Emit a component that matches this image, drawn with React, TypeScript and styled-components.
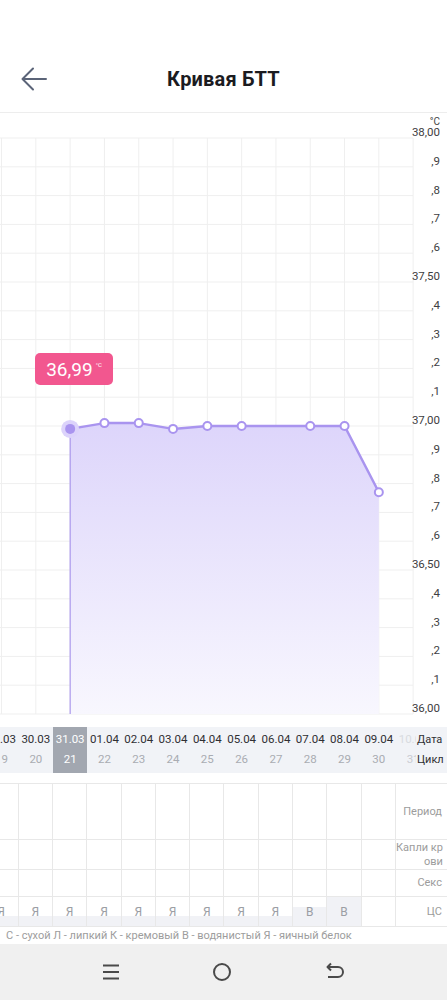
import styled, { createGlobalStyle } from 'styled-components';

const GlobalStyle = createGlobalStyle`
  body {
    margin: 0;
    font-family: Roboto, 'Noto Sans', sans-serif;
    background: #fff;
  }
`;

const COL = 34.3;
const SHIFT = -15.6;
const TOP = 25;
const STEP = 28.8;

const days = [
  { date: '29.03', cycle: 19, cs: 'Я', fill: 10 },
  { date: '30.03', cycle: 20, cs: 'Я', fill: 10 },
  { date: '31.03', cycle: 21, cs: 'Я', fill: 10, temp: 36.99, active: true },
  { date: '01.04', cycle: 22, cs: 'Я', fill: 10, temp: 37.01 },
  { date: '02.04', cycle: 23, cs: 'Я', fill: 10, temp: 37.01 },
  { date: '03.04', cycle: 24, cs: 'Я', fill: 10, temp: 36.99 },
  { date: '04.04', cycle: 25, cs: 'Я', fill: 10, temp: 37.0 },
  { date: '05.04', cycle: 26, cs: 'Я', fill: 10, temp: 37.0 },
  { date: '06.04', cycle: 27, cs: 'Я', fill: 10 },
  { date: '07.04', cycle: 28, cs: 'В', fill: 19, temp: 37.0 },
  { date: '08.04', cycle: 29, cs: 'В', fill: 29, temp: 37.0 },
  { date: '09.04', cycle: 30, cs: '', fill: 0, temp: 36.77 },
  { date: '10.04', cycle: 31, cs: '', fill: 0, faded: true },
];

const yLabels = ['38,00', ',9', ',8', ',7', ',6', '37,50', ',4', ',3', ',2', ',1', '37,00', ',9', ',8', ',7', ',6', '36,50', ',4', ',3', ',2', ',1', '36,00'];

const colX = (i: number) => SHIFT + COL * i + COL / 2;
const tempY = (t: number) => TOP + (38 - t) * 10 * STEP;

const Page = styled.div`
  width: 447px;
  height: 1000px;
  display: flex;
  flex-direction: column;
  overflow: hidden;
`;

const StatusBar = styled.div`
  height: 48px;
`;

const Header = styled.div`
  height: 64px;
  border-bottom: 1px solid #ededed;
  display: flex;
  align-items: center;
  justify-content: center;
  position: relative;
`;

const BackButton = styled.div`
  position: absolute;
  left: 20px;
  top: 17px;
  width: 28px;
  height: 28px;
`;

const Title = styled.h1`
  margin: 0 0 2px;
  font-size: 20px;
  font-weight: 700;
  color: #1b1b1f;
  letter-spacing: 0.2px;
`;

const ChartArea = styled.div`
  position: relative;
  height: 614px;
`;

const Tooltip = styled.div`
  position: absolute;
  left: 35px;
  top: 240px;
  width: 78px;
  height: 32px;
  border-radius: 5px;
  background: #f2578f;
  color: #fff;
  display: flex;
  align-items: center;
  justify-content: center;
  font-size: 19px;
  sup {
    font-size: 6px;
    margin-left: 3px;
    margin-top: -10px;
  }
`;

const Strip = styled.div`
  height: 46px;
  background: #f1f3f7;
  display: flex;
  position: relative;
`;

const Track = styled.div<{ $width: number }>`
  width: ${(p) => p.$width}px;
  flex-shrink: 0;
  overflow: hidden;
  display: flex;
`;

const Columns = styled.div`
  display: flex;
  margin-left: ${SHIFT}px;
`;

const DayCell = styled.div<{ $active?: boolean; $faded?: boolean }>`
  width: ${COL}px;
  flex-shrink: 0;
  display: flex;
  flex-direction: column;
  align-items: center;
  justify-content: space-around;
  padding: 2px 0 4px;
  box-sizing: border-box;
  background: ${(p) => (p.$active ? '#a2a7b0' : 'transparent')};
  font-size: 11.5px;
  color: ${(p) => (p.$active ? '#fff' : p.$faded ? '#d8dbe0' : '#2f2f33')};
  white-space: nowrap;
`;

const CycleNum = styled.span<{ $active?: boolean; $faded?: boolean }>`
  font-size: 11.5px;
  color: ${(p) => (p.$active ? '#fff' : p.$faded ? '#c9ccd2' : '#a9acb2')};
`;

const StripLabels = styled.div`
  flex: 1;
  display: flex;
  flex-direction: column;
  justify-content: space-around;
  padding: 2px 0 4px 1px;
  font-size: 11px;
  color: #2f2f33;
  background: #f1f3f7;
  white-space: nowrap;
`;

const Table = styled.div`
  margin-top: 10px;
  border-top: 1px solid #e8e8e8;
`;

const Row = styled.div<{ $h: number }>`
  height: ${(p) => p.$h}px;
  display: flex;
  border-bottom: 1px solid #e8e8e8;
`;

const Cell = styled.div<{ $fill?: number }>`
  width: ${COL}px;
  flex-shrink: 0;
  box-sizing: border-box;
  border-right: 1px solid #e8e8e8;
  display: flex;
  align-items: center;
  justify-content: center;
  font-size: 12px;
  color: #9b9ea4;
  background: linear-gradient(
    to top,
    #f1f2f6 ${(p) => p.$fill ?? 0}px,
    #fff ${(p) => p.$fill ?? 0}px
  );
`;

const RowLabel = styled.div`
  flex: 1;
  display: flex;
  align-items: center;
  justify-content: flex-end;
  text-align: right;
  padding-right: 5px;
  font-size: 11px;
  line-height: 14px;
  color: #9c9c9c;
  white-space: nowrap;
`;

const Legend = styled.div`
  height: 17px;
  padding-left: 6px;
  font-size: 11px;
  line-height: 17px;
  color: #9d9d9d;
  white-space: nowrap;
`;

const NavBar = styled.div`
  flex: 1;
  background: #f0f0f0;
  display: flex;
  align-items: center;
  justify-content: space-around;
  padding: 0 56px;
`;

const tableRows = [
  { label: <>Период</>, h: 55 },
  { label: <>Капли кр<br />ови</>, h: 29 },
  { label: <>Секс</>, h: 26 },
];

function Chart() {
  const pts = days
    .map((d, i) => (d.temp !== undefined ? { x: colX(i), y: tempY(d.temp), active: d.active } : null))
    .filter((p): p is { x: number; y: number; active: boolean | undefined } => p !== null);
  const bottom = TOP + 20 * STEP;
  const line = pts.map((p) => `${p.x},${p.y}`).join(' ');
  const area = `${pts[0].x},${bottom} ${line} ${pts[pts.length - 1].x},${bottom}`;

  return (
    <svg width="447" height="614" style={{ display: 'block' }}>
      <defs>
        <linearGradient id="fill" x1="0" y1="0" x2="0" y2="1">
          <stop offset="0" stopColor="#ddd5fb" />
          <stop offset="1" stopColor="#f8f7fe" />
        </linearGradient>
      </defs>
      {yLabels.map((_, k) => (
        <line key={`h${k}`} x1="0" x2="413" y1={TOP + k * STEP} y2={TOP + k * STEP} stroke="#efefef" strokeWidth="1" />
      ))}
      {days.map((_, i) => (
        <line key={`v${i}`} x1={colX(i)} x2={colX(i)} y1={TOP} y2={bottom} stroke="#efefef" strokeWidth="1" />
      ))}
      <polygon points={area} fill="url(#fill)" />
      <line x1={pts[0].x} x2={pts[0].x} y1={pts[0].y} y2={bottom} stroke="#9d88ea" strokeWidth="1" />
      <polyline points={line} fill="none" stroke="#a994ef" strokeWidth="2.5" strokeLinejoin="round" />
      {pts.map((p, i) =>
        p.active ? (
          <g key={i}>
            <circle cx={p.x} cy={p.y} r="9" fill="#dcd3fb" />
            <circle cx={p.x} cy={p.y} r="5" fill="#a994ef" />
          </g>
        ) : (
          <circle key={i} cx={p.x} cy={p.y} r="4" fill="#fff" stroke="#a994ef" strokeWidth="2" />
        )
      )}
      <text x="440" y="12" fontSize="10" textAnchor="end" fill="#444" fontFamily="Roboto, sans-serif">°C</text>
      {yLabels.map((l, k) => (
        <text key={`t${k}`} x="440" y={TOP + k * STEP - 2} fontSize="11.5" textAnchor="end" fill="#3e3e42" fontFamily="Roboto, sans-serif">
          {l}
        </text>
      ))}
    </svg>
  );
}

export default function App() {
  return (
    <Page>
      <GlobalStyle />
      <StatusBar />
      <Header>
        <BackButton>
          <svg width="28" height="28" viewBox="0 0 28 28" fill="none" stroke="#5b6478" strokeWidth="2" strokeLinecap="round" strokeLinejoin="round">
            <path d="M26 14H3M13 3.5L2.5 14 13 24.5" />
          </svg>
        </BackButton>
        <Title>Кривая БТТ</Title>
      </Header>

      <ChartArea>
        <Chart />
        <Tooltip>
          36,99<sup>°C</sup>
        </Tooltip>
      </ChartArea>

      <Strip>
        <Track $width={416}>
          <Columns>
            {days.map((d) => (
              <DayCell key={d.date} $active={d.active} $faded={d.faded}>
                <span>{d.date}</span>
                <CycleNum $active={d.active} $faded={d.faded}>{d.cycle}</CycleNum>
              </DayCell>
            ))}
          </Columns>
        </Track>
        <StripLabels>
          <span>Дата</span>
          <span>Цикл</span>
        </StripLabels>
      </Strip>

      <Table>
        {tableRows.map((r, ri) => (
          <Row key={ri} $h={r.h}>
            <Track $width={396}>
              <Columns>
                {days.slice(0, 12).map((d) => (
                  <Cell key={d.date} />
                ))}
              </Columns>
            </Track>
            <RowLabel>{r.label}</RowLabel>
          </Row>
        ))}
        <Row $h={29}>
          <Track $width={396}>
            <Columns>
              {days.slice(0, 12).map((d) => (
                <Cell key={d.date} $fill={d.fill}>
                  {d.cs}
                </Cell>
              ))}
            </Columns>
          </Track>
          <RowLabel>ЦС</RowLabel>
        </Row>
      </Table>

      <Legend>С - сухой Л - липкий К - кремовый В - водянистый Я - яичный белок</Legend>

      <NavBar>
        <svg width="20" height="20" viewBox="0 0 20 20" stroke="#4a4a4a" strokeWidth="2">
          <path d="M2 3.5h16M2 10h16M2 16.5h16" />
        </svg>
        <svg width="22" height="22" viewBox="0 0 22 22" fill="none" stroke="#4a4a4a" strokeWidth="2">
          <circle cx="11" cy="11" r="8" />
        </svg>
        <svg width="22" height="22" viewBox="0 0 22 22" fill="none" stroke="#4a4a4a" strokeWidth="2" strokeLinejoin="round">
          <path d="M4 6h10a5 5 0 0 1 0 10H4" />
          <path d="M7 2.5L3.5 6 7 9.5" />
        </svg>
      </NavBar>
    </Page>
  );
}
